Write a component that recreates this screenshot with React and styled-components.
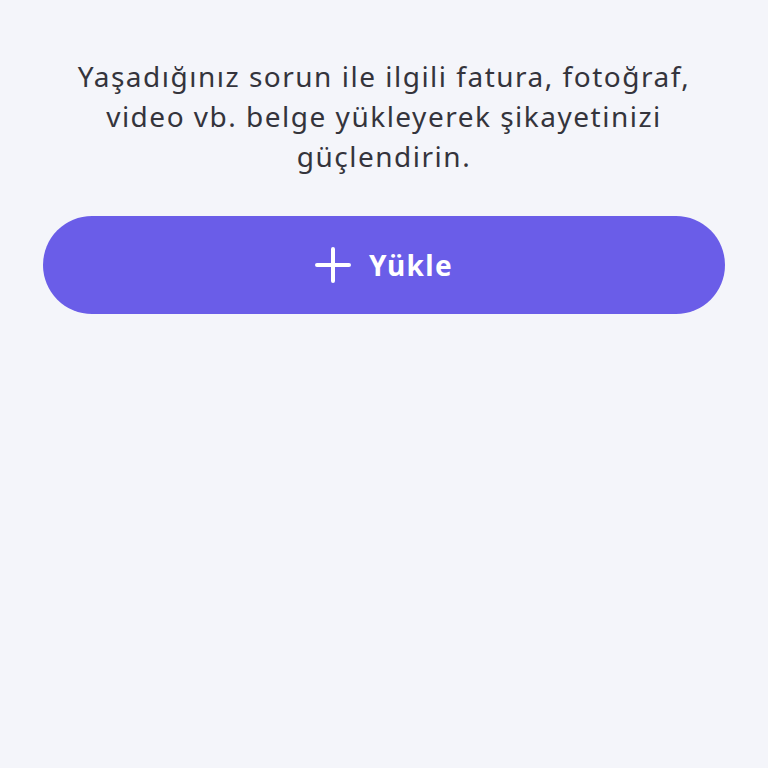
import React from "react";
import styled, { createGlobalStyle } from "styled-components";

const Global = createGlobalStyle`
  html, body { margin: 0; padding: 0; background: #f4f5fa; }
  body { font-family: "Noto Sans", "Open Sans", sans-serif; }
`;

const Page = styled.div`
  min-height: 768px;
  box-sizing: border-box;
  padding: 56px 43px 0;
  display: flex;
  flex-direction: column;
  align-items: stretch;
  gap: 40px;
  background: #f4f5fa;
`;

const Description = styled.p`
  margin: 0;
  text-align: center;
  font-size: 28px;
  line-height: 40px;
  letter-spacing: 1.5px;
  color: #34343c;
  font-weight: 400;
  padding: 0 20px;
`;

const UploadButton = styled.button`
  height: 98px;
  border: none;
  border-radius: 49px;
  background: #6a5de8;
  color: #ffffff;
  display: flex;
  align-items: center;
  justify-content: center;
  gap: 18px;
  font-family: "Noto Sans", "Open Sans", sans-serif;
  font-weight: 700;
  font-size: 28px;
  letter-spacing: 1.3px;
  cursor: pointer;
`;

const PlusIcon = () => (
  <svg width="36" height="36" viewBox="0 0 36 36" fill="none">
    <path d="M18 2v32M2 18h32" stroke="#fff" strokeWidth="4" strokeLinecap="round" />
  </svg>
);

export default function App() {
  return (
    <>
      <Global />
      <Page>
        <Description>
          Yaşadığınız sorun ile ilgili fatura, fotoğraf, video vb. belge yükleyerek şikayetinizi güçlendirin.
        </Description>
        <UploadButton>
          <PlusIcon />
          Yükle
        </UploadButton>
      </Page>
    </>
  );
}
